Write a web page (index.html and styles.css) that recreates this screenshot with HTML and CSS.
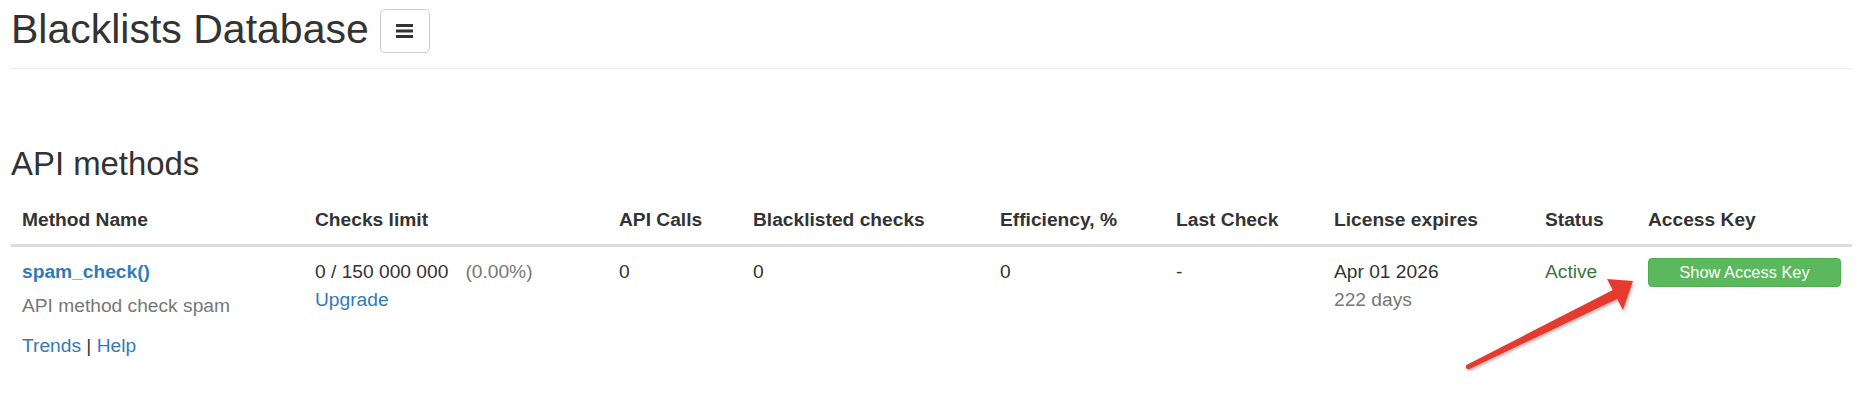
FILE: index.html
```html
<!DOCTYPE html>
<html lang="en">
<head>
<meta charset="utf-8">
<title>Blacklists Database</title>
<link rel="stylesheet" href="styles.css">
</head>
<body>
<div class="page">
  <header class="page-header">
    <h2 class="title">Blacklists Database</h2>
    <button class="menu-btn" type="button" aria-label="Menu">
      <svg class="menu-icon" width="17" height="14" viewBox="0 0 17 14">
        <rect x="0" y="0" width="17" height="3" fill="#333"/>
        <rect x="0" y="5.5" width="17" height="3" fill="#333"/>
        <rect x="0" y="11" width="17" height="3" fill="#333"/>
      </svg>
    </button>
  </header>

  <h3 class="section-title">API methods</h3>

  <table class="methods">
    <colgroup>
      <col class="c1"><col class="c2"><col class="c3"><col class="c4"><col class="c5"><col class="c6"><col class="c7"><col class="c8"><col class="c9">
    </colgroup>
    <thead>
      <tr>
        <th>Method Name</th>
        <th>Checks limit</th>
        <th>API Calls</th>
        <th>Blacklisted checks</th>
        <th>Efficiency, %</th>
        <th>Last Check</th>
        <th>License expires</th>
        <th>Status</th>
        <th>Access Key</th>
      </tr>
    </thead>
    <tbody>
      <tr>
        <td>
          <a class="method-name" href="#">spam_check()</a>
          <p class="method-desc">API method check spam</p>
          <div class="method-links"><a href="#">Trends</a> | <a href="#">Help</a></div>
        </td>
        <td>
          <div>0 / 150 000 000<span class="muted pct">(0.00%)</span></div>
          <a href="#">Upgrade</a>
        </td>
        <td>0</td>
        <td>0</td>
        <td>0</td>
        <td>-</td>
        <td>
          <div>Apr 01 2026</div>
          <div class="muted">222 days</div>
        </td>
        <td class="status">Active</td>
        <td><button class="key-btn" type="button">Show Access Key</button></td>
      </tr>
    </tbody>
  </table>

  <svg class="arrow" width="200" height="115" viewBox="0 0 200 115" aria-hidden="true">
    <defs>
      <filter id="sh" x="-20%" y="-20%" width="140%" height="140%">
        <feDropShadow dx="1" dy="2" stdDeviation="1.5" flood-color="#000" flood-opacity="0.28"/>
      </filter>
    </defs>
    <path filter="url(#sh)" fill="#e53b2f" d="M16.9 99.8 L162.8 25 L157 14 L183 16 L173 45 L167.2 34 L19.1 104.2 A2.5 2.5 0 0 1 16.9 99.8 Z"/>
  </svg>
</div>
</body>
</html>
```

FILE: styles.css
```css
* { box-sizing: border-box; }

html, body {
  margin: 0;
  padding: 0;
  background: #fff;
}

body {
  font-family: "Liberation Sans", Arial, Helvetica, sans-serif;
  font-size: 19.2px;
  line-height: 27.4px;
  color: #333;
}

a {
  color: #337ab7;
  text-decoration: none;
}

.page {
  position: relative;
  margin: 0 5px 0 11px;
}

.page-header {
  display: flex;
  align-items: flex-start;
  height: 69px;
  border-bottom: 1px solid #eee;
}

.title {
  margin: 7px 0 0 0;
  font-size: 41px;
  line-height: 45px;
  font-weight: 400;
  color: #333;
}

.menu-btn {
  margin: 9px 0 0 11px;
  width: 50px;
  height: 44px;
  padding: 0;
  border: 1px solid #ccc;
  border-radius: 5px;
  background: #fff;
  display: flex;
  align-items: center;
  justify-content: center;
}

.menu-icon { display: block; }

.section-title {
  margin: 77px 0 13px 0;
  font-size: 32.9px;
  line-height: 36px;
  font-weight: 400;
  color: #333;
}

.methods {
  width: 100%;
  border-collapse: collapse;
  table-layout: fixed;
}

.c1 { width: 293px; }
.c2 { width: 304px; }
.c3 { width: 134px; }
.c4 { width: 247px; }
.c5 { width: 176px; }
.c6 { width: 158px; }
.c7 { width: 211px; }
.c8 { width: 103px; }
.c9 { width: 215px; }

.methods th {
  text-align: left;
  font-weight: bold;
  padding: 11px;
  vertical-align: bottom;
  border-bottom: 3px solid #ddd;
  white-space: nowrap;
}

.methods td {
  padding: 11px;
  vertical-align: top;
}

.method-name {
  font-weight: bold;
}

.method-desc {
  margin: 6px 0 13px 0;
  color: #777;
}

.muted { color: #777; }

.pct { margin-left: 17px; }

.status { color: #3c763d; }

.key-btn {
  display: block;
  width: 100%;
  padding: 1px 7px;
  font-family: "Liberation Sans", Arial, Helvetica, sans-serif;
  font-size: 16.4px;
  line-height: 24.7px;
  color: #fff;
  text-align: center;
  background: #5cb85c;
  border: 1px solid #4cae4c;
  border-radius: 4px;
}

.arrow {
  position: absolute;
  left: 1439px;
  top: 265px;
  pointer-events: none;
}
```
